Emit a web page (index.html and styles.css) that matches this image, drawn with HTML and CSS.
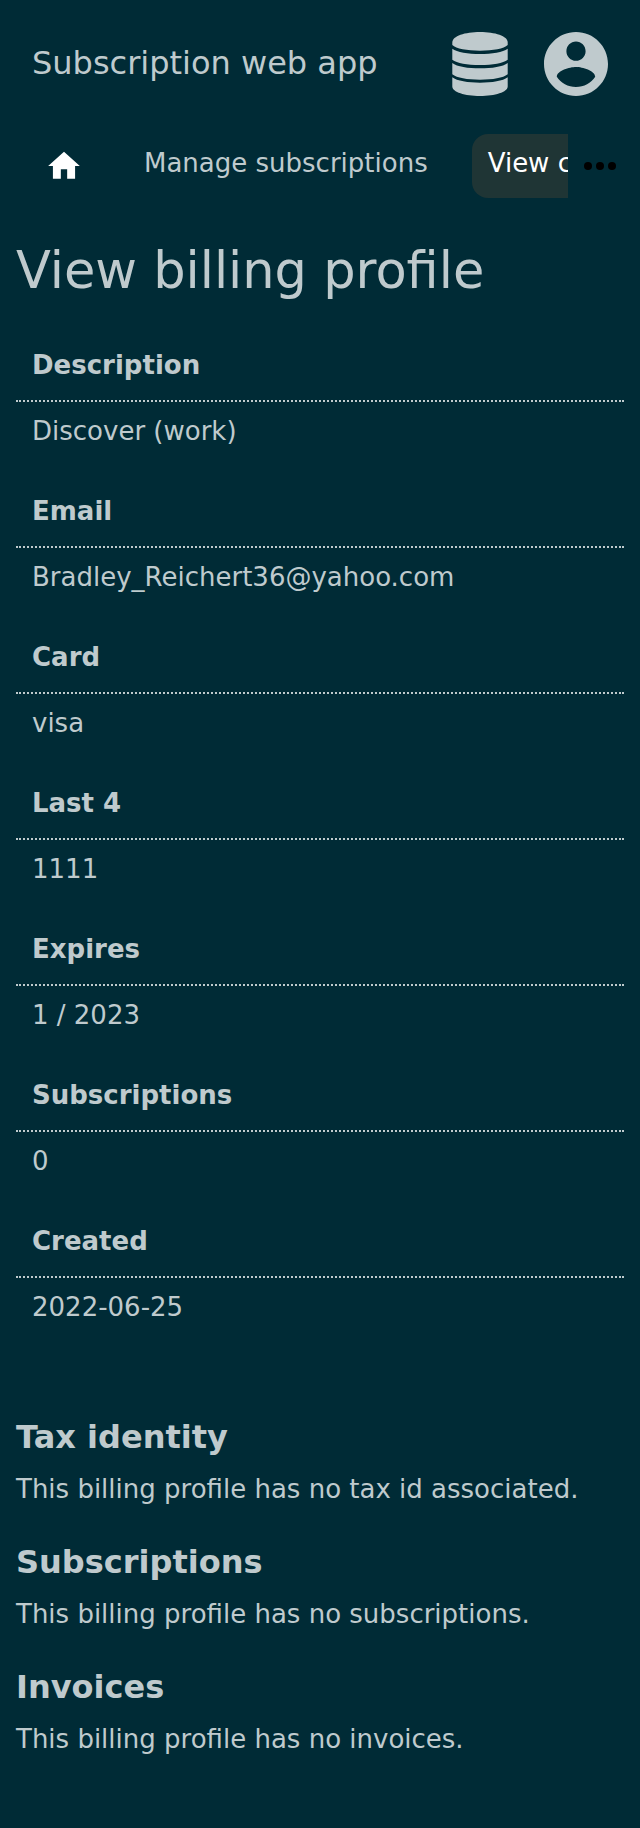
FILE: index.html
```html
<!DOCTYPE html>
<html lang="en">
<head>
<meta charset="utf-8">
<meta name="viewport" content="width=device-width, initial-scale=1">
<title>View billing profile</title>
<link rel="stylesheet" href="styles.css">
</head>
<body>
<header class="header">
  <span class="brand">Subscription web app</span>
  <button class="icon-button" type="button" aria-label="Administration">
    <svg class="header-icon" viewBox="0 0 64 64" aria-hidden="true">
      <path d="M4.3 10.5C4.3 4 17 0 32 0S59.700 4 59.700 10.500V13C56 16.700 45 18.700 32 18.700S8 16.700 4.300 13Z"/>
      <path d="M4.300 16.700C9 20.300 20 22 32 22S55 20.300 59.700 16.700V27.700C55 31.300 45 33 32 33S9 31.300 4.300 27.700Z"/>
      <path d="M4.300 30.900C9 34.600 20 36.300 32 36.300S55 34.600 59.700 30.900V42.300C55 46 45 47.700 32 47.700S9 46 4.300 42.300Z"/>
      <path d="M4.300 45.300C9 49 20 50.700 32 50.700S55 49 59.700 45.300V54.500C59.700 60 47 64 32 64S4.300 60 4.300 54.500Z"/>
    </svg>
  </button>
  <button class="icon-button" type="button" aria-label="Account">
    <svg class="header-icon" viewBox="2 2 20 20" aria-hidden="true">
      <path d="M12 2C6.480 2 2 6.480 2 12s4.480 10 10 10 10-4.480 10-10S17.520 2 12 2zm0 3c1.660 0 3 1.340 3 3s-1.340 3-3 3-3-1.340-3-3 1.340-3 3-3zm0 14.200c-2.500 0-4.710-1.280-6-3.220.030-1.990 4-3.080 6-3.080 1.990 0 5.970 1.090 6 3.080-1.290 1.940-3.500 3.220-6 3.220z"/>
    </svg>
  </button>
</header>

<nav class="navbar" aria-label="Main">
  <div class="tabs">
    <a class="tab tab-home" href="#" aria-label="Home">
      <svg class="home-icon" viewBox="0 0 24 24" aria-hidden="true"><path d="M10 20v-6h4v6h5v-8h3L12 3 2 12h3v8z"/></svg>
    </a>
    <a class="tab" href="#">Manage subscriptions</a>
    <a class="tab tab-active" href="#" aria-current="page">View c</a>
  </div>
  <button class="icon-button" type="button" aria-label="More">
    <svg class="more-icon" viewBox="0 0 24 24" aria-hidden="true">
      <circle cx="6" cy="12" r="2"/><circle cx="12" cy="12" r="2"/><circle cx="18" cy="12" r="2"/>
    </svg>
  </button>
</nav>

<main class="content">
  <h1 class="title">View billing profile</h1>
  <dl class="details">
    <dt class="label">Description</dt>
    <dd class="value">Discover (work)</dd>
    <dt class="label">Email</dt>
    <dd class="value">Bradley_Reichert36@yahoo.com</dd>
    <dt class="label">Card</dt>
    <dd class="value">visa</dd>
    <dt class="label">Last 4</dt>
    <dd class="value">1111</dd>
    <dt class="label">Expires</dt>
    <dd class="value">1 / 2023</dd>
    <dt class="label">Subscriptions</dt>
    <dd class="value">0</dd>
    <dt class="label">Created</dt>
    <dd class="value">2022-06-25</dd>
  </dl>
  <section class="section">
    <h2 class="heading">Tax identity</h2>
    <p class="text">This billing profile has no tax id associated.</p>
  </section>
  <section class="section">
    <h2 class="heading">Subscriptions</h2>
    <p class="text">This billing profile has no subscriptions.</p>
  </section>
  <section class="section">
    <h2 class="heading">Invoices</h2>
    <p class="text">This billing profile has no invoices.</p>
  </section>
</main>
</body>
</html>
```

FILE: styles.css
```css
* {
  box-sizing: border-box;
}

body {
  margin: 0;
  background: #002b36;
  color: #bfcacd;
  font-family: "DejaVu Sans", sans-serif;
  font-size: 26px;
  line-height: 30px;
}

.header {
  display: flex;
  align-items: center;
  gap: 32px;
  padding: 32px;
}

.brand {
  flex: 1;
  padding-bottom: 2px;
  font-size: 32px;
  line-height: 40px;
}

.icon-button {
  display: flex;
  padding: 0;
  border: 0;
  background: none;
  color: inherit;
}

.header-icon {
  width: 64px;
  height: 64px;
  fill: currentColor;
}

.navbar {
  display: flex;
  align-items: center;
  gap: 8px;
  margin-top: 6px;
  padding: 0 16px 0 32px;
}

.tabs {
  flex: 1;
  display: flex;
  gap: 32px;
  min-width: 0;
  overflow: hidden;
}

.tab {
  flex: none;
  height: 64px;
  padding: 14px 12px 14px 16px;
  border-radius: 16px;
  color: inherit;
  text-decoration: none;
  white-space: nowrap;
}

.tab-home {
  padding: 13px;
  color: #fff;
}

.tab-active {
  background: #1f3535;
  color: #fff;
}

.home-icon {
  display: block;
  width: 38px;
  height: 38px;
  fill: currentColor;
}

.more-icon {
  width: 48px;
  height: 48px;
  fill: #000;
}

.content {
  padding: 41px 16px 54px;
}

.title {
  margin: 0;
  font-size: 51px;
  font-weight: 400;
  line-height: 64px;
}

.details {
  margin: 47px 0 0;
}

.label {
  padding: 0 16px 20px;
  border-bottom: 2px dotted currentColor;
  font-weight: 700;
}

.value {
  margin: 0 0 50px;
  padding: 14px 16px 0;
}

.details + .section {
  padding-top: 45px;
}

.section {
  margin-bottom: 38px;
}

.heading {
  margin: 0 0 17px;
  font-size: 32px;
  line-height: 40px;
}

.text {
  margin: 0;
}
```
